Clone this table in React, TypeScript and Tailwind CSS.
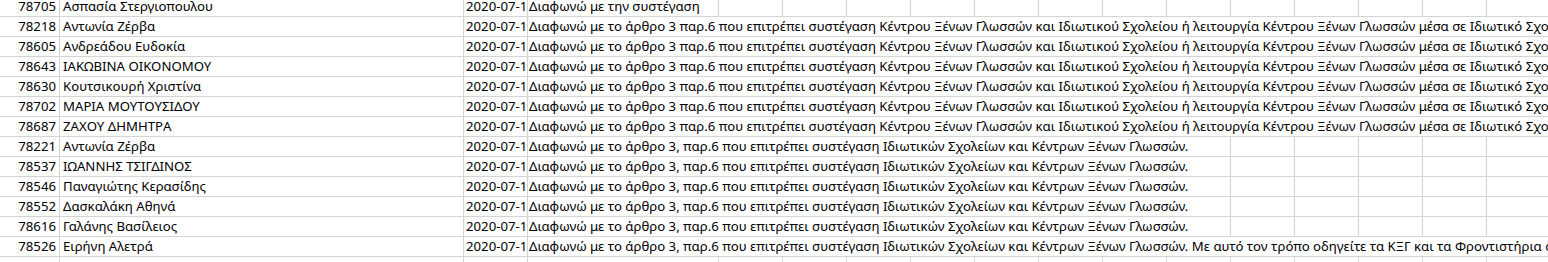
import React from "react";

type Row = { id: string; name: string; date: string; text: string; span: number };

const LONG1 =
  "Διαφωνώ με το άρθρο 3 παρ.6 που επιτρέπει συστέγαση Κέντρου Ξένων Γλωσσών και Ιδιωτικού Σχολείου ή λειτουργία Κέντρου Ξένων Γλωσσών μέσα σε Ιδιωτικό Σχολείο";
const MID =
  "Διαφωνώ με το άρθρο 3, παρ.6 που επιτρέπει συστέγαση Ιδιωτικών Σχολείων και Κέντρων Ξένων Γλωσσών.";
const LONG2 =
  "Διαφωνώ με το άρθρο 3, παρ.6 που επιτρέπει συστέγαση Ιδιωτικών Σχολείων και Κέντρων Ξένων Γλωσσών. Με αυτό τον τρόπο οδηγείτε τα ΚΞΓ και τα Φροντιστήρια σε κλείσιμο";

const ROWS: Row[] = [
  { id: "78705", name: "Ασπασία Στεργιοπουλου", date: "2020-07-15", text: "Διαφωνώ με την συστέγαση", span: 0 },
  { id: "78218", name: "Αντωνία Ζέρβα", date: "2020-07-14", text: LONG1, span: 14 },
  { id: "78605", name: "Ανδρεάδου Ευδοκία", date: "2020-07-15", text: LONG1, span: 14 },
  { id: "78643", name: "ΙΑΚΩΒΙΝΑ ΟΙΚΟΝΟΜΟΥ", date: "2020-07-15", text: LONG1, span: 14 },
  { id: "78630", name: "Κουτσικουρή Χριστίνα", date: "2020-07-15", text: LONG1, span: 14 },
  { id: "78702", name: "ΜΑΡΙΑ ΜΟΥΤΟΥΣΙΔΟΥ", date: "2020-07-15", text: LONG1, span: 14 },
  { id: "78687", name: "ΖΑΧΟΥ ΔΗΜΗΤΡΑ", date: "2020-07-15", text: LONG1, span: 14 },
  { id: "78221", name: "Αντωνία Ζέρβα", date: "2020-07-14", text: MID, span: 8 },
  { id: "78537", name: "ΙΩΑΝΝΗΣ ΤΣΙΓΔΙΝΟΣ", date: "2020-07-15", text: MID, span: 8 },
  { id: "78546", name: "Παναγιώτης Κερασίδης", date: "2020-07-15", text: MID, span: 8 },
  { id: "78552", name: "Δασκαλάκη Αθηνά", date: "2020-07-15", text: MID, span: 8 },
  { id: "78616", name: "Γαλάνης Βασίλειος", date: "2020-07-15", text: MID, span: 8 },
  { id: "78526", name: "Ειρήνη Αλετρά", date: "2020-07-15", text: LONG2, span: 14 },
  { id: "", name: "", date: "", text: "", span: 0 },
];

const EXTRA = 14;

function SheetRow({ r }: { r: Row }) {
  const empties = Array.from({ length: Math.max(0, EXTRA - r.span) });
  return (
    <div className="flex h-[20px] shrink-0 border-b border-[#d4d4d4] leading-none">
      <div className="flex w-[60px] shrink-0 items-end justify-end border-r border-[#d4d4d4] pb-[3px] pr-[3px]">
        {r.id}
      </div>
      <div className="flex w-[404px] shrink-0 items-end overflow-hidden whitespace-nowrap border-r border-[#d4d4d4] pb-[3px] pl-[3px]">
        {r.name}
      </div>
      <div className="flex w-[64px] shrink-0 items-end overflow-hidden whitespace-nowrap border-r border-[#d4d4d4] pb-[3px] pl-[2px]">
        {r.date}
      </div>
      {r.span === 0 ? (
        <div className="flex w-[191px] shrink-0 items-end overflow-hidden whitespace-nowrap border-r border-[#d4d4d4] pb-[3px] pl-[1px]">
          {r.text}
        </div>
      ) : r.span >= EXTRA ? (
        <div className="flex min-w-0 flex-1 items-end overflow-hidden whitespace-nowrap pb-[3px] pl-[1px]">
          {r.text}
        </div>
      ) : (
        <div className="flex w-[703px] shrink-0 items-end overflow-hidden whitespace-nowrap border-r border-[#d4d4d4] pb-[3px] pl-[1px]">
          {r.text}
        </div>
      )}
      {r.span < EXTRA &&
        empties.map((_, i) => (
          <div key={i} className="w-[64px] shrink-0 border-r border-[#d4d4d4]" />
        ))}
    </div>
  );
}

export default function App() {
  return (
    <div
      className="h-[262px] w-[1548px] overflow-hidden bg-white text-[13.2px] text-black"
      style={{ fontFamily: '"Noto Sans", "Open Sans", sans-serif' }}
    >
      <div className="-mt-[3px] flex w-[1600px] flex-col">
        {ROWS.map((r, i) => (
          <SheetRow key={i} r={r} />
        ))}
      </div>
    </div>
  );
}
